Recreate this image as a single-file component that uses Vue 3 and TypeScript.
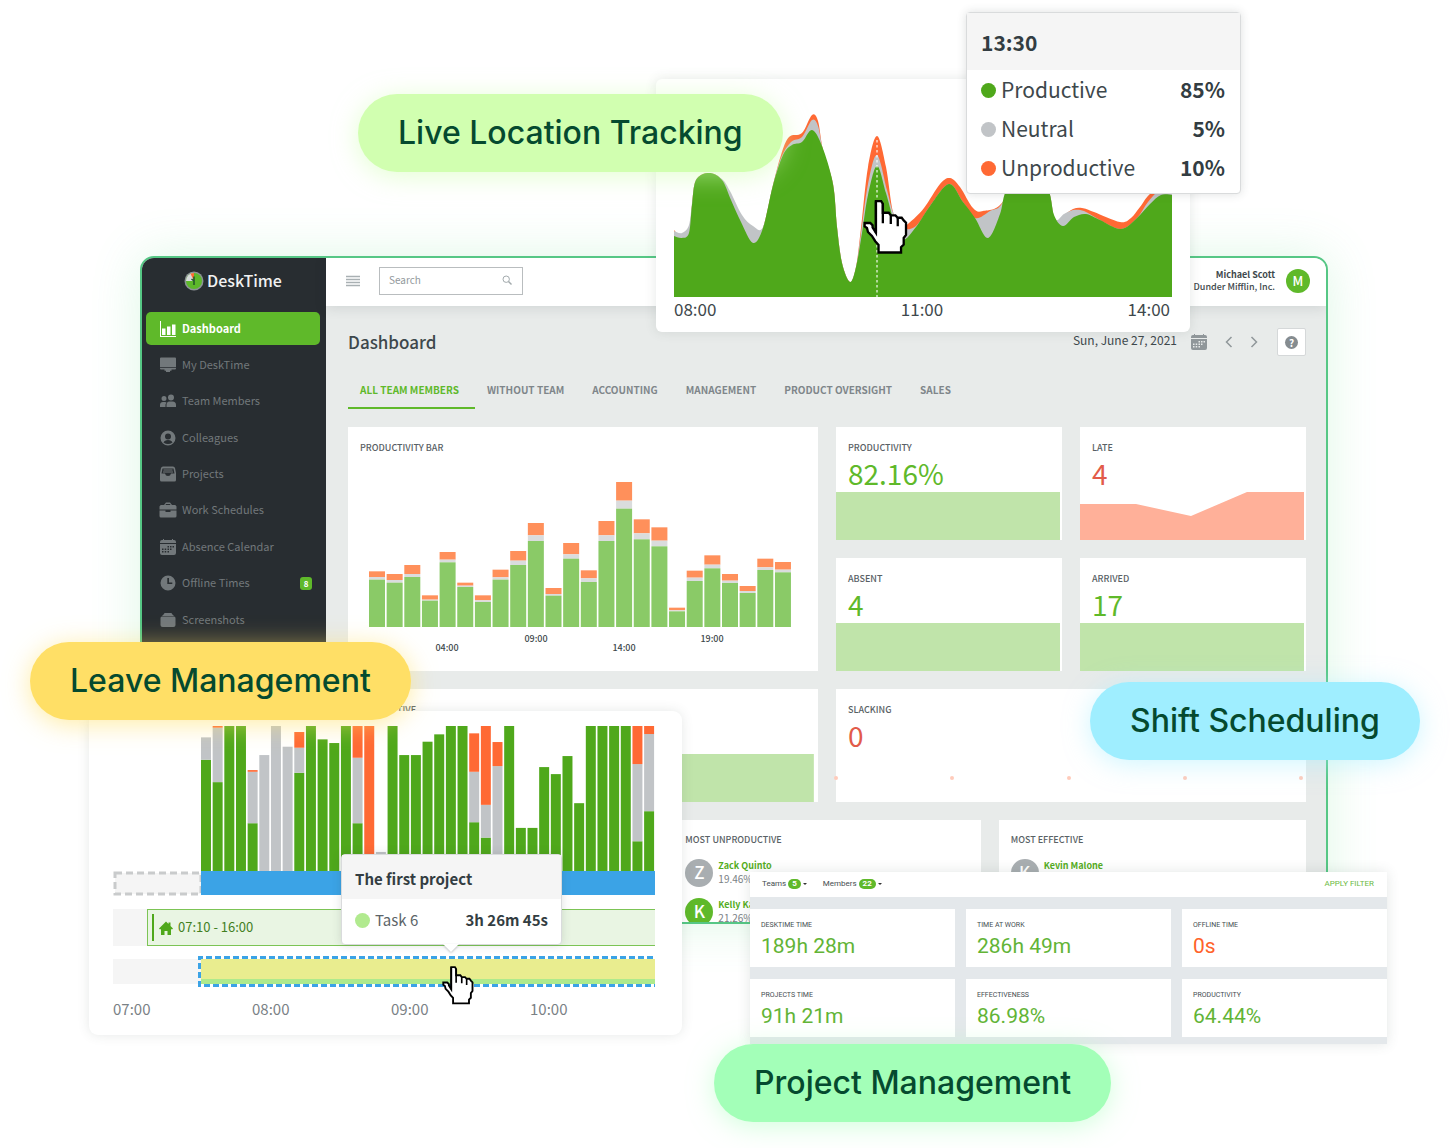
<script setup lang="ts">
type Point = [number, number]

interface Stack {
  productive: number
  neutral: number
  unproductive: number
}

const menu = [
  { label: 'Dashboard', icon: 'chart' },
  { label: 'My DeskTime', icon: 'monitor' },
  { label: 'Team Members', icon: 'team' },
  { label: 'Colleagues', icon: 'user' },
  { label: 'Projects', icon: 'inbox' },
  { label: 'Work Schedules', icon: 'briefcase' },
  { label: 'Absence Calendar', icon: 'calendar' },
  { label: 'Offline Times', icon: 'clock', badge: '8' },
  { label: 'Screenshots', icon: 'folder' },
]

const tabs = ['ALL TEAM MEMBERS', 'WITHOUT TEAM', 'ACCOUNTING', 'MANAGEMENT', 'PRODUCT OVERSIGHT', 'SALES']

const stats = [
  { title: 'PRODUCTIVITY', value: '82.16%', tone: 'good', area: '0,0 224,0 224,48 0,48' },
  { title: 'LATE', value: '4', tone: 'bad', area: '0,12 56,12 111,24 167,0 224,0 224,48 0,48' },
  { title: 'ABSENT', value: '4', tone: 'good', area: '0,0 224,0 224,48 0,48' },
  { title: 'ARRIVED', value: '17', tone: 'good', area: '0,0 224,0 224,48 0,48' },
]

// Heights above the axis, in thirds of a pixel: total, neutral + productive, productive
const hourly: [number, number, number][] = [
  [167, 150, 142], [159, 141, 133], [186, 159, 150], [95, 82, 79], [225, 202, 194], [133, 124, 120],
  [95, 80, 75], [172, 149, 142], [228, 199, 186], [312, 275, 258], [117, 99, 94], [252, 218, 205],
  [170, 146, 135], [318, 275, 258], [435, 379, 355], [323, 281, 263], [299, 259, 242], [58, 50, 47],
  [169, 148, 138], [215, 187, 176], [159, 139, 132], [123, 108, 102], [205, 179, 171], [195, 172, 164],
]

const day: Stack[] = [
  { productive: 333, neutral: 67, unproductive: 0 },
  { productive: 266, neutral: 163, unproductive: 5 },
  ...only('productive', 434, 434),
  { productive: 143, neutral: 154, unproductive: 5 },
  ...only('neutral', 347, 434, 372),
  { productive: 294, neutral: 75, unproductive: 47 },
  ...only('productive', 434, 394, 383, 434),
  { productive: 143, neutral: 196, unproductive: 95 },
  ...only('unproductive', 434),
  ...only('neutral', 57),
  ...only('productive', 434, 347, 347, 387, 409, 434, 434),
  { productive: 146, neutral: 151, unproductive: 115 },
  { productive: 100, neutral: 98, unproductive: 236 },
  { productive: 40, neutral: 274, unproductive: 72 },
  ...only('productive', 434, 129, 129, 311, 290, 344, 203, 434, 434, 434, 434),
  { productive: 89, neutral: 231, unproductive: 114 },
  { productive: 179, neutral: 231, unproductive: 24 },
]

function only(kind: keyof Stack, ...values: number[]): Stack[] {
  return values.map((v) => ({ productive: 0, neutral: 0, unproductive: 0, [kind]: v }))
}

const productive: Point[] = [
  [674, 236], [682, 238], [689, 233], [692, 205], [696, 180], [709, 173], [722, 180], [731, 200], [741, 222],
  [753, 243], [763, 228], [773, 185], [783, 155], [792, 145], [802, 142], [812, 130], [822, 146], [833, 184],
  [837, 227], [842, 263], [850, 282], [856, 267], [862, 233], [868, 195], [877, 166], [886, 193], [893, 218],
  [902, 240], [916, 227], [930, 206], [949, 184], [963, 202], [975, 218], [988, 238], [1000, 214], [1006, 190],
  [1027, 140], [1048, 188], [1054, 215], [1063, 226], [1074, 217], [1086, 214], [1100, 220], [1121, 229],
  [1137, 218], [1150, 204], [1161, 195], [1172, 195],
]
const neutral: Point[] = [
  [674, 231], [682, 233], [689, 225], [692, 203], [696, 180], [709, 173], [722, 179], [730, 191], [742, 215],
  [753, 226], [763, 227], [773, 185], [781, 158], [791, 142], [802, 137], [812, 120], [818, 126], [823, 150],
  [833, 184], [837, 227], [842, 263], [850, 282], [856, 267], [861, 233], [868, 184], [877, 155], [887, 190],
  [893, 212], [902, 228], [916, 226], [930, 206], [949, 184], [963, 202], [975, 218], [990, 211], [1004, 200],
  [1027, 140], [1048, 188], [1055, 219], [1064, 214], [1073, 210], [1084, 211], [1100, 220], [1121, 229],
  [1137, 218], [1148, 202], [1160, 190], [1172, 190],
]
const unproductive: Point[] = [
  [674, 230], [682, 238], [689, 233], [692, 205], [696, 180], [709, 173], [722, 180], [731, 200], [741, 222],
  [753, 243], [763, 228], [773, 185], [781, 155], [789, 137], [802, 133], [812, 115], [818, 121], [823, 150],
  [833, 184], [837, 227], [842, 263], [850, 282], [856, 267], [861, 228], [868, 167], [877, 136], [886, 167],
  [893, 212], [902, 226], [909, 223], [924, 208], [940, 184], [950, 178], [960, 187], [973, 208], [983, 211],
  [1004, 200], [1027, 140], [1048, 188], [1055, 221], [1064, 215], [1073, 209], [1082, 208], [1094, 212],
  [1120, 222], [1131, 218], [1140, 207], [1151, 193], [1172, 180],
]

function area(points: Point[]): string {
  let d = `M${points[0][0]},297 L${points[0].join()}`
  for (let i = 0; i < points.length - 1; i++) {
    const a = points[Math.max(i - 1, 0)]
    const b = points[i]
    const c = points[i + 1]
    const e = points[Math.min(i + 2, points.length - 1)]
    d += ` C${b[0] + (c[0] - a[0]) / 6},${b[1] + (c[1] - a[1]) / 6} ${c[0] - (e[0] - b[0]) / 6},${c[1] - (e[1] - b[1]) / 6} ${c.join()}`
  }
  return `${d} V297 Z`
}

const layers = [
  { name: 'unproductive', d: area(unproductive) },
  { name: 'neutral', d: area(neutral) },
  { name: 'productive', d: area(productive) },
]

const breakdown = [
  { label: 'Productive', share: '85%', tone: 'productive' },
  { label: 'Neutral', share: '5%', tone: 'neutral' },
  { label: 'Unproductive', share: '10%', tone: 'unproductive' },
]

const people = [
  { initial: 'Z', name: 'Zack Quinto', share: '19.46%', tone: 'muted' },
  { initial: 'K', name: 'Kelly Kapoor', share: '21.26%', tone: 'fresh' },
]

const totals = [
  { title: 'DESKTIME TIME', value: '189h 28m' },
  { title: 'TIME AT WORK', value: '286h 49m' },
  { title: 'OFFLINE TIME', value: '0s', warn: true },
  { title: 'PROJECTS TIME', value: '91h 21m' },
  { title: 'EFFECTIVENESS', value: '86.98%' },
  { title: 'PRODUCTIVITY', value: '64.44%' },
]
</script>

<template>
  <div class="scene">
    <main class="window">
      <aside class="sidebar">
        <a class="brand" href="#">
          <svg viewBox="0 0 20 20" width="20" height="20" aria-hidden="true">
            <circle cx="10" cy="10" r="9.5" fill="#8d9396" />
            <circle cx="10" cy="10" r="8" fill="#5db82a" />
            <path d="M10 10V2A8 8 0 0 0 2 10Z" fill="#d7dadb" />
            <path d="M10 10V2A8 8 0 0 0 6.500 2.800Z" fill="#ff6a35" />
            <path d="M10 5.500V14M10 10l-2.500-2" stroke="#25592a" stroke-width="1.600" fill="none" />
          </svg>
          <span>DeskTime</span>
        </a>
        <nav class="menu">
          <a v-for="(item, i) in menu" :key="item.label" href="#" class="menu-item" :class="{ active: i === 0 }">
            <svg viewBox="0 0 18 18" width="18" height="18" fill="currentColor" aria-hidden="true">
              <template v-if="item.icon === 'chart'">
                <path d="M1 1h1v15h15v1H1z" />
                <path d="M3 8.500h3.500V15H3zM8 6.500h3.500V15H8zM13 4.500h3.500V15H13z" />
              </template>
              <path v-else-if="item.icon === 'monitor'" d="M2 1.500h14q1 0 1 1V11H1V2.500q0-1 1-1zM1 11.700h16v.8q0 1-1 1h-3.500v1.200H11V16H7v-1.300H5.500v-1.200H2q-1 0-1-1z" />
              <path v-else-if="item.icon === 'team'" d="M5 4a2.500 2.500 0 1 1 0 5 2.500 2.500 0 0 1 0-5zM12 2.500a3 3 0 1 1 0 6 3 3 0 0 1 0-6zM1 15v-2q0-3 3-3h2q1 0 1.500.5Q6 12 6.500 15zM7.500 15v-2q0-3.500 3-3.500h3q3.500 0 3.500 3.500v2z" />
              <path v-else-if="item.icon === 'user'" fill-rule="evenodd" d="M9 1.500a7.500 7.500 0 1 1 0 15 7.500 7.500 0 0 1 0-15zM9 4.500a3 3 0 1 0 0 6 3 3 0 0 0 0-6zM4.500 13.500Q9 16.500 13.500 13.500Q12.500 11 9 11T4.500 13.500z" />
              <path v-else-if="item.icon === 'inbox'" fill-rule="evenodd" d="M4 1.500h10q1.500 0 2 1.500l1 5v7q0 1.500-1.500 1.500h-13Q1 16.500 1 15V8l1-5q.5-1.500 2-1.500zM3.500 3.500L2.500 8.500H6Q6.500 11 9 11t3-2.500h3.500l-1-5zM4.500 4.500h9v1h-9zM4 6.500h10v1H4z" />
              <path v-else-if="item.icon === 'briefcase'" fill-rule="evenodd" d="M5 4l2-2.500h4L13 4h3q1 0 1.500 1.500V8.500H.5v-3Q1 4 2 4zM7 3l-.5 1h5L11 3zM.5 9.500H6.500v1.500h5V9.500h6V15q0 1.500-1.500 1.500H2Q.5 16.500.5 15z" />
              <path v-else-if="item.icon === 'calendar'" fill-rule="evenodd" d="M4 1h1v1h8V1h1v1h1q2 0 2 2v1H1V4q0-2 2-2h1zM1 6h16v9q0 2-2 2H3q-2 0-2-2zM11 8v1.500h1.500V8zM13.500 8v1.500H15V8zM8.500 8v1.500H10V8zM3 10.500V12h1.500v-1.500zM5.700 10.500V12h1.500v-1.500zM8.500 10.500V12H10v-1.500zM11 10.500V12h1.500v-1.500zM3 13v1.500h1.500V13zM5.700 13v1.500h1.500V13zM8.500 13v1.500H10V13z" />
              <path v-else-if="item.icon === 'clock'" fill-rule="evenodd" d="M9 1.500a7.500 7.500 0 1 1 0 15 7.500 7.500 0 0 1 0-15zM8.300 4v6h5V8.500H10V4z" />
              <path v-else d="M5 3q0-1 1-1h6q1 0 1 1l2 2H3zM3 5.500h12q1.500 0 1.500 1.500v7q0 2-2 2h-11q-2 0-2-2V7q0-1.500 1.500-1.500z" />
            </svg>
            <span>{{ item.label }}</span>
            <b v-if="item.badge" class="menu-badge">{{ item.badge }}</b>
          </a>
        </nav>
      </aside>

      <div class="body">
        <header class="topbar">
          <button class="icon-button" aria-label="Menu">
            <svg viewBox="0 0 14 12" width="14" height="12"><path d="M0 1.500h14M0 4.500h14M0 7.500h14M0 10.500h14" stroke="#a9b0b3" stroke-width="1.500" /></svg>
          </button>
          <label class="search">
            <input type="text" placeholder="Search" aria-label="Search" />
            <svg viewBox="0 0 10 10" width="10" height="10" fill="none" stroke="#a2a9ac" aria-hidden="true">
              <circle cx="4.200" cy="4.200" r="3.200" /><path d="M6.500 6.500L9.500 9.500" stroke-width="1.400" />
            </svg>
          </label>
          <div class="account">
            <p class="account-text"><b>Michael Scott</b><span>Dunder Mifflin, Inc.</span></p>
            <span class="avatar fresh small">M</span>
          </div>
        </header>

        <section class="content">
          <div class="heading">
            <h1>Dashboard</h1>
            <div class="date-tools">
              <span class="date">Sun, June 27, 2021</span>
              <button class="icon-button" aria-label="Calendar">
                <svg viewBox="0 0 18 18" width="18" height="18" fill="#90979a">
                  <path fill-rule="evenodd" d="M4 1h1v1h8V1h1v1h1q2 0 2 2v1H1V4q0-2 2-2h1zM1 6h16v9q0 2-2 2H3q-2 0-2-2zM11 8v1.500h1.500V8zM13.500 8v1.500H15V8zM8.500 8v1.500H10V8zM3 10.500V12h1.500v-1.500zM5.700 10.500V12h1.500v-1.500zM8.500 10.500V12H10v-1.500zM11 10.500V12h1.500v-1.500zM3 13v1.500h1.500V13zM5.700 13v1.500h1.500V13zM8.500 13v1.500H10V13z" />
                </svg>
              </button>
              <button class="icon-button" aria-label="Previous day">
                <svg viewBox="0 0 8 12" width="8" height="12"><path d="M6.500 1L1.500 6l5 5" fill="none" stroke="#90979a" stroke-width="1.500" /></svg>
              </button>
              <button class="icon-button" aria-label="Next day">
                <svg viewBox="0 0 8 12" width="8" height="12"><path d="M1.500 1l5 5-5 5" fill="none" stroke="#90979a" stroke-width="1.500" /></svg>
              </button>
              <button class="help" aria-label="Help"><span>?</span></button>
            </div>
          </div>

          <nav class="tabs">
            <a v-for="(tab, i) in tabs" :key="tab" href="#" :class="{ active: i === 0 }">{{ tab }}</a>
          </nav>

          <div class="cards">
            <article class="card productivity-bar">
              <h2>PRODUCTIVITY BAR</h2>
              <svg viewBox="0 0 470 200" class="bar-chart">
                <g v-for="(h, i) in hourly" :key="i" :transform="`translate(${21 + i * 17.65} 156)`">
                  <rect :y="-h[0] / 3" width="16" :height="(h[0] - h[1]) / 3" fill="#ff905b" />
                  <rect :y="-h[1] / 3" width="16" :height="(h[1] - h[2]) / 3" fill="#dadcdd" />
                  <rect :y="-h[2] / 3" width="16" :height="h[2] / 3" fill="#8aca67" />
                </g>
                <g class="bar-labels">
                  <text x="99" y="180">04:00</text>
                  <text x="188" y="171">09:00</text>
                  <text x="276" y="180">14:00</text>
                  <text x="364" y="171">19:00</text>
                </g>
              </svg>
            </article>

            <article v-for="stat in stats" :key="stat.title" class="card stat" :class="stat.tone">
              <h2>{{ stat.title }}</h2>
              <p class="value">{{ stat.value }}</p>
              <svg viewBox="0 0 226 48" preserveAspectRatio="none" class="spark"><polygon :points="stat.area" /></svg>
            </article>

            <article class="card stat good">
              <h2>PRODUCTIVE</h2>
              <svg viewBox="0 0 226 48" preserveAspectRatio="none" class="spark"><polygon points="0,0 224,0 224,48 0,48" /></svg>
            </article>

            <article class="card stat bad slacking">
              <h2>SLACKING</h2>
              <p class="value">0</p>
              <div class="dots"><i v-for="n in 5" :key="n"></i></div>
            </article>
          </div>

          <div class="rankings">
            <article class="card"></article>
            <article class="card ranking">
              <h2>MOST UNPRODUCTIVE</h2>
              <ul>
                <li v-for="person in people" :key="person.name">
                  <span class="avatar" :class="person.tone">{{ person.initial }}</span>
                  <p><b>{{ person.name }}</b><span>{{ person.share }}</span></p>
                </li>
              </ul>
            </article>
            <article class="card ranking">
              <h2>MOST EFFECTIVE</h2>
              <ul>
                <li>
                  <span class="avatar muted">K</span>
                  <p><b>Kevin Malone</b></p>
                </li>
              </ul>
            </article>
          </div>
        </section>
      </div>
    </main>

    <section class="panel location">
      <svg viewBox="674 97 498 200" class="area-chart">
        <path v-for="layer in layers" :key="layer.name" :class="layer.name" :d="layer.d" />
        <path d="M877 140V297" stroke="#fff" stroke-opacity=".75" stroke-width="1.500" stroke-dasharray="2.500 2.500" />
      </svg>
      <div class="axis"><span>08:00</span><span>11:00</span><span>14:00</span></div>
      <svg class="cursor" viewBox="667 594 136 171" aria-hidden="true">
        <path d="M706 603H722L727 611V638H745L751 646H765L772 653H784L790 661L797 668V705L790 714V734L782 742V758H714V735L704 724L694 708L682 696L679 684L672 679V669H689L696 676V682L706 698Z" fill="#fff" stroke="#000" stroke-width="7" />
        <path d="M706 603V699M727 611V670M751 646V672M772 653V679" fill="none" stroke="#000" stroke-width="7" />
      </svg>
    </section>

    <section class="tooltip moment">
      <h3>13:30</h3>
      <ul>
        <li v-for="row in breakdown" :key="row.label">
          <i :class="row.tone"></i><span>{{ row.label }}</span><b>{{ row.share }}</b>
        </li>
      </ul>
    </section>

    <section class="panel leave">
      <svg viewBox="0 0 1365 434" preserveAspectRatio="none" class="day-chart">
        <g v-for="(bar, i) in day" :key="i" :transform="`translate(${i * 35.06} 434)`">
          <rect class="productive" :y="-bar.productive" width="30" :height="bar.productive" />
          <rect class="neutral" :y="-bar.productive - bar.neutral" width="30" :height="bar.neutral" />
          <rect class="unproductive" :y="-bar.productive - bar.neutral - bar.unproductive" width="30" :height="bar.unproductive" />
        </g>
      </svg>
      <div class="track online">
        <svg class="away"><rect x="2" y="2" width="86" height="21" fill="#f5f5f5" stroke="#c9cbcc" stroke-width="3" stroke-dasharray="7 4" /></svg>
        <span></span>
      </div>
      <div class="track shift">
        <div class="shift-box">
          <svg viewBox="0 0 14 14" width="14" height="14" aria-hidden="true"><path d="M7 .5L9.500 3V1.500h2V5L14 7.500l-1 1-1-.5v6H8.500v-4h-3v4H2V8l-1 .5-1-1z" fill="#4fa81b" /></svg>
          <span>07:10 - 16:00</span>
        </div>
      </div>
      <div class="track task">
        <svg class="task-box">
          <rect x="3" y="3" width="100%" height="20" fill="#e9ed8f" />
          <rect x="3" y="23" width="100%" height="5" fill="#aeea8c" />
          <path d="M500 1.500H1.500V29.500H500" fill="none" stroke="#3ba3e6" stroke-width="3" stroke-dasharray="6 3" />
        </svg>
      </div>
      <div class="hours"><span>07:00</span><span>08:00</span><span>09:00</span><span>10:00</span></div>

      <div class="tooltip project">
        <h3>The first project</h3>
        <p><i></i><span>Task 6</span><b>3h 26m 45s</b></p>
      </div>
      <svg class="cursor" viewBox="667 594 136 171" aria-hidden="true">
        <path d="M706 603H722L727 611V638H745L751 646H765L772 653H784L790 661L797 668V705L790 714V734L782 742V758H714V735L704 724L694 708L682 696L679 684L672 679V669H689L696 676V682L706 698Z" fill="#fff" stroke="#000" stroke-width="8" />
        <path d="M706 603V699M727 611V670M751 646V672M772 653V679" fill="none" stroke="#000" stroke-width="7" />
      </svg>
    </section>

    <section class="report">
      <header>
        <button>Teams <b>5</b><i></i></button>
        <button>Members <b>22</b><i></i></button>
        <button class="apply">APPLY FILTER</button>
      </header>
      <div class="report-grid">
        <article v-for="total in totals" :key="total.title">
          <h2>{{ total.title }}</h2>
          <p :class="{ warn: total.warn }">{{ total.value }}</p>
        </article>
      </div>
    </section>

    <span class="pill tracking">Live Location Tracking</span>
    <span class="pill leaves">Leave Management</span>
    <span class="pill shifts">Shift Scheduling</span>
    <span class="pill projects">Project Management</span>
  </div>
</template>

<style>
body {
  margin: 0;
  background: #fff;
}
</style>

<style scoped>
.scene {
  position: relative;
  min-width: 1200px;
  min-height: 1148px;
  padding: 256px 124px 0 140px;
  box-sizing: border-box;
  overflow: hidden;
  color: #3e484c;
  font-family: "Noto Sans CJK SC", "Noto Sans", sans-serif;
}
.scene * {
  box-sizing: border-box;
}
h1, h2, h3, p, ul {
  margin: 0;
  padding: 0;
  list-style: none;
}
svg {
  display: block;
}
a {
  color: inherit;
  text-decoration: none;
}
button {
  padding: 0;
  border: 0;
  background: none;
  font: inherit;
  color: inherit;
}

.window {
  display: flex;
  border: 2px solid #56c785;
  border-radius: 14px;
  overflow: hidden;
  background: #e8ebea;
  box-shadow: 0 0 50px rgba(90, 220, 130, 0.2);
}
.sidebar {
  flex: 0 0 184px;
  background: #282d31;
}
.brand {
  display: flex;
  align-items: center;
  gap: 3px;
  height: 46px;
  margin-bottom: 8px;
  padding-left: 42px;
  color: #f1f2f2;
  font-size: 16px;
  font-weight: 500;
}
.brand span, .menu-item span {
  padding-bottom: 2px;
}
.menu {
  display: flex;
  flex-direction: column;
  justify-content: space-between;
  height: 324px;
  padding: 0 6px 0 4px;
}
.menu-item {
  display: flex;
  align-items: center;
  gap: 5px;
  height: 33px;
  padding: 0 8px 0 13px;
  border-radius: 5px;
  color: #72787b;
  font-size: 11px;
  line-height: 16px;
}
.menu-item.active {
  background: #5fb92a;
  color: #fff;
  font-weight: 700;
}
.menu-badge {
  margin-left: auto;
  width: 12px;
  height: 13px;
  border-radius: 3px;
  background: #5fb92a;
  color: #fff;
  font-size: 8px;
  line-height: 13px;
  text-align: center;
}

.body {
  flex: 1;
  min-width: 0;
}
.topbar {
  position: relative;
  display: flex;
  align-items: center;
  height: 48px;
  padding: 0 16px 3px 20px;
  background: #fff;
  box-shadow: 0 2px 12px rgba(40, 50, 60, 0.12);
}
.icon-button {
  display: flex;
}
.search {
  display: flex;
  align-items: center;
  width: 144px;
  height: 28px;
  margin-left: 19px;
  padding: 0 10px 2px 9px;
  border: 1px solid #b9bdbf;
}
.search input {
  flex: 1;
  min-width: 0;
  padding: 0;
  border: 0;
  outline: 0;
  background: none;
  font: 10px/14px "Noto Sans CJK SC", sans-serif;
}
.search input::placeholder {
  color: #92999c;
}
.account {
  display: flex;
  align-items: center;
  gap: 11px;
  margin-left: auto;
}
.account-text {
  display: flex;
  flex-direction: column;
  font-size: 9px;
  font-weight: 500;
  line-height: 12px;
  text-align: right;
}
.avatar {
  flex: none;
  width: 28px;
  height: 28px;
  border-radius: 50%;
  color: #fff;
  font-size: 17px;
  font-weight: 500;
  line-height: 26px;
  text-align: center;
}
.avatar.small {
  width: 24px;
  height: 24px;
  font-size: 13px;
  line-height: 23px;
}
.fresh {
  background: #5fb92a;
}
.muted {
  background: #a9aeb1;
}

.content {
  padding: 22px 20px 0 22px;
}
.heading {
  display: flex;
  align-items: center;
  justify-content: space-between;
  height: 28px;
}
h1 {
  font-size: 17px;
  font-weight: 500;
  line-height: 24px;
}
.date-tools {
  display: flex;
  align-items: center;
}
.date {
  margin-right: 13px;
  padding-bottom: 5px;
  font-size: 12px;
  line-height: 16px;
}
.date-tools .icon-button + .icon-button {
  margin-left: 17px;
}
.help {
  width: 29px;
  height: 28px;
  margin-left: 19px;
  border: 1px solid #d5d8d9;
  border-radius: 2px;
  background: #fff;
}
.help span {
  display: block;
  width: 13px;
  height: 13px;
  margin: auto;
  border-radius: 50%;
  background: #858c90;
  color: #fff;
  font-size: 10px;
  font-weight: 700;
  line-height: 13px;
}
.tabs {
  display: flex;
  margin: 15px 0 18px;
}
.tabs a {
  height: 38px;
  padding: 0 16px 0 12px;
  color: #7f868a;
  font-size: 10px;
  font-weight: 700;
  line-height: 38px;
}
.tabs .active {
  border-bottom: 2px solid #5fb92a;
  color: #5fb92a;
}

.cards {
  display: grid;
  grid-template-columns: 470fr 226fr 226fr;
  grid-auto-rows: 113px;
  gap: 18px;
}
.card {
  min-width: 0;
  background: #fff;
}
.card h2 {
  padding: 14px 12px 0;
  font-size: 9px;
  font-weight: 500;
  line-height: 14px;
  color: #596165;
}
.productivity-bar {
  grid-row: span 2;
}
.bar-chart {
  width: 100%;
  margin-top: 16px;
}
.bar-labels {
  fill: #3e484c;
  font-size: 9px;
  font-weight: 500;
  text-anchor: middle;
}
.stat {
  display: flex;
  flex-direction: column;
}
.value {
  padding: 4px 12px 0;
  font-size: 28px;
  line-height: 28px;
}
.good .value {
  color: #5fb92a;
}
.bad .value {
  color: #e25b4a;
}
.spark {
  width: 100%;
  height: 48px;
  margin-top: auto;
}
.good polygon {
  fill: #c0e4aa;
}
.bad polygon {
  fill: #ffb099;
}
.slacking {
  grid-column: span 2;
}
.dots {
  display: flex;
  justify-content: space-between;
  margin: 27px 3px 0 -2px;
}
.dots i {
  width: 4px;
  height: 4px;
  border-radius: 50%;
  background: #ffcbbb;
}
.rankings {
  display: grid;
  grid-template-columns: repeat(3, 1fr);
  gap: 18px;
  margin-top: 18px;
  height: 102px;
}
.ranking {
  overflow: hidden;
}
.rankings h2 {
  padding-top: 13px;
}
.ranking ul {
  display: flex;
  flex-direction: column;
  gap: 11px;
  padding: 12px 12px 0;
}
.ranking li {
  display: flex;
  gap: 5px;
  height: 28px;
}
.ranking p {
  display: flex;
  flex-direction: column;
  font-size: 10px;
  line-height: 13px;
  color: #7a8185;
}
.ranking b {
  color: #55ad22;
  font-size: 9px;
}

.panel {
  position: absolute;
  background: #fff;
  border-radius: 6px;
  box-shadow: 0 0 12px rgba(60, 80, 70, 0.13);
}
.productive {
  fill: #4fa81b;
  background: #4fa81b;
}
.neutral {
  fill: #c1c4c7;
  background: #c1c4c7;
}
.unproductive {
  fill: #ff6934;
  background: #ff6934;
}
.location {
  top: 79px;
  left: 656px;
  width: 534px;
  padding: 18px 18px 12px;
}
.area-chart {
  width: 100%;
}
.axis {
  display: flex;
  justify-content: space-between;
  padding-right: 2px;
  font-size: 17px;
  line-height: 23px;
}
.location .cursor {
  position: absolute;
  top: 119px;
  left: 207px;
  width: 45px;
  height: 57px;
}
.tooltip {
  position: absolute;
  border: 1px solid #d9dbdc;
  border-radius: 4px;
  background: #fff;
  box-shadow: 0 0 10px rgba(50, 60, 65, 0.16);
}
.tooltip h3 {
  background: #f5f5f5;
  color: #333d42;
  font-weight: 700;
}
.moment {
  top: 12px;
  left: 966px;
  width: 275px;
  font-size: 21px;
}
.moment h3 {
  height: 57px;
  padding: 0 14px;
  font-size: 21px;
  line-height: 58px;
}
.moment ul {
  padding: 1px 15px 5px 14px;
}
.moment li {
  display: flex;
  align-items: center;
  gap: 5px;
  height: 39px;
  line-height: 30px;
}
.moment i {
  width: 15px;
  height: 15px;
  border-radius: 50%;
}
.moment span, .moment li b {
  padding-bottom: 3px;
}
.moment b, .project b {
  margin-left: auto;
  color: #333d42;
}

.leave {
  top: 711px;
  left: 89px;
  width: 593px;
  padding: 15px 27px 15px 24px;
  border-radius: 9px;
}
.day-chart {
  width: 454px;
  height: 145px;
  margin-left: 88px;
}
.track {
  display: flex;
  position: relative;
}
.online {
  height: 24px;
}
.away {
  width: 88px;
  height: 25px;
}
.online span {
  flex: 1;
  background: #3ba3e6;
}
.shift {
  height: 37px;
  margin-top: 14px;
  padding-left: 34px;
  background: #f5f5f5;
}
.shift-box {
  position: relative;
  display: flex;
  align-items: center;
  gap: 5px;
  flex: 1;
  padding-left: 11px;
  border: 1px solid #7cc455;
  border-right: 0;
  background: #e9f5e3;
  color: #43801f;
  font-size: 13px;
}
.shift-box span {
  padding-bottom: 2px;
}
.shift-box::before {
  content: "";
  position: absolute;
  left: 4px;
  top: 4px;
  bottom: 4px;
  width: 2px;
  background: #4fa81b;
}
.task {
  height: 31px;
  margin-top: 10px;
  padding-left: 85px;
  background: linear-gradient(#f5f5f5, #f5f5f5) 0 3px / 100% 25px no-repeat;
}
.task-box {
  width: 100%;
  height: 31px;
}
.hours {
  display: flex;
  margin-top: 11px;
  color: #7a8185;
  font-size: 15px;
  line-height: 22px;
}
.hours span {
  flex: 0 0 139px;
}
.hours span:last-child {
  flex-basis: 0;
}
.project {
  top: 143px;
  left: 252px;
  width: 221px;
  font-size: 15px;
}
.project::after {
  content: "";
  position: absolute;
  left: 101px;
  bottom: -8px;
  border: solid transparent;
  border-width: 8px 8px 0;
  border-top-color: #fff;
  filter: drop-shadow(0 1px 1px rgba(50, 60, 65, 0.3));
}
.project h3 {
  height: 44px;
  padding: 0 13px;
  font-size: 15px;
  line-height: 48px;
}
.project p {
  display: flex;
  align-items: center;
  height: 45px;
  padding: 0 13px 3px;
  color: #5c6468;
}
.project span, .project b {
  padding-bottom: 2px;
}
.project i {
  width: 15px;
  height: 15px;
  margin-right: 5px;
  border-radius: 50%;
  background: #b1ea8f;
}
.leave .cursor {
  position: absolute;
  top: 254px;
  left: 353px;
  width: 32px;
  height: 40px;
}

.report {
  position: absolute;
  top: 872px;
  left: 750px;
  width: 637px;
  padding-bottom: 7px;
  background: #e4e8eb;
  box-shadow: 0 0 12px rgba(60, 80, 70, 0.14);
  color: #454d51;
  font-family: Roboto, sans-serif;
}
.report header {
  display: flex;
  align-items: center;
  gap: 16px;
  height: 25px;
  padding: 0 13px 1px 12px;
  background: #fff;
  font-size: 8px;
  line-height: 10px;
}
.report header button {
  display: flex;
  align-items: center;
  gap: 2px;
}
.report header b {
  min-width: 12px;
  padding: 0 4px;
  border-radius: 5px;
  background: #5fb92a;
  color: #fff;
}
.report header i {
  border: solid transparent;
  border-width: 2px 2px 0;
  border-top-color: #333;
}
.report header .apply {
  margin-left: auto;
  color: #6dbb45;
}
.report-grid {
  display: grid;
  grid-template-columns: repeat(3, 1fr);
  gap: 12px 11px;
  margin-top: 12px;
}
.report article {
  height: 58px;
  padding: 11px 11px 0;
  background: #fff;
}
.report h2 {
  font-size: 7px;
  font-weight: 400;
  line-height: 10px;
}
.report p {
  margin-top: 4px;
  color: #62b436;
  font-size: 21px;
  line-height: 24px;
}
.report p.warn {
  color: #ff6229;
}

.pill {
  position: absolute;
  padding: 0 40px;
  border-radius: 39px;
  color: #054a2f;
  font-family: Inter, sans-serif;
  font-size: 32px;
  font-weight: 500;
  line-height: 78px;
  white-space: nowrap;
}
.tracking {
  top: 94px;
  left: 358px;
  background: #d1ffb0;
  box-shadow: 0 4px 26px rgba(209, 255, 176, 0.6);
}
.leaves {
  top: 642px;
  left: 30px;
  background: #ffdf66;
  box-shadow: 0 4px 26px rgba(255, 223, 102, 0.6);
}
.shifts {
  top: 682px;
  left: 1090px;
  background: #9feeff;
  box-shadow: 0 4px 26px rgba(159, 238, 255, 0.5);
}
.projects {
  top: 1044px;
  left: 714px;
  background: #a3ffb8;
  box-shadow: 0 4px 26px rgba(163, 255, 184, 0.5);
}
</style>
